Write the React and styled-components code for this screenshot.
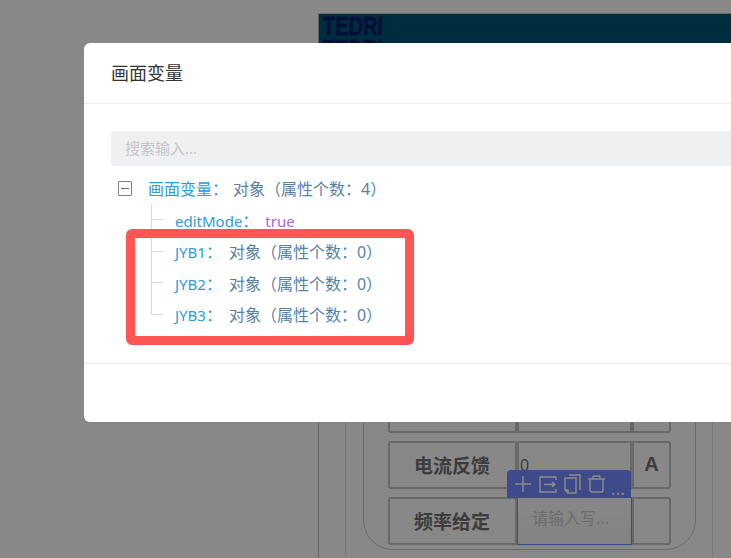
import React from 'react';
import styled, { createGlobalStyle } from 'styled-components';

const GlobalStyle = createGlobalStyle`
  html, body {
    margin: 0;
    height: 100%;
    overflow: hidden;
    background: #f7f7f7;
    font-family: "Noto Sans", "Noto Sans CJK SC", sans-serif;
  }
  * { box-sizing: border-box; }
`;

const Page = styled.div`
  width: 731px;
  height: 558px;
  padding: 13px 0 0 318px;
  overflow: hidden;
`;

const Canvas = styled.div`
  width: 500px;
  border-top: 1px solid #c4c4c4;
  border-left: 1px solid #b5b5b5;
`;

const Banner = styled.div`
  height: 120px;
  padding: 1px 4px;
  background: #005073;
`;

const LogoLine = styled.div`
  color: #001c6a;
  font-family: "Liberation Sans", sans-serif;
  font-size: 25px;
  font-weight: 700;
  line-height: 23px;
  white-space: nowrap;
  -webkit-text-stroke: 0.6px #001c6a;
  transform: scaleX(0.8);
  transform-origin: left center;
`;

const Frame = styled.div`
  width: 368px;
  margin-left: 26px;
  padding: 238px 17px 40px;
  border-left: 1px solid #dcdcdc;
  border-right: 1px solid #dcdcdc;
`;

const Card = styled.div`
  display: flex;
  flex-direction: column;
  gap: 8px;
  width: 333px;
  padding: 12px 24px 4px;
  border: 1px solid #c4c4c4;
  border-radius: 30px;
`;

const FormRow = styled.div`
  display: grid;
  grid-template-columns: 129px 115px 39px;
  height: 48px;
`;

const Cell = styled.div`
  display: flex;
  align-items: center;
  justify-content: ${(p) => (p.$center ? 'center' : 'flex-start')};
  padding-bottom: 2px;
  border: 2px solid #c0c0c0;
  border-radius: ${(p) => p.$radius || '0'};
  color: #6e6e6e;
  font-family: "Liberation Sans", "Noto Sans CJK SC", sans-serif;
  font-size: ${(p) => (p.$center ? '20px' : '19px')};
  font-weight: 700;
`;

const LabelText = styled.span`
  padding-left: 24px;
`;

const ValueCell = styled.div`
  display: flex;
  align-items: center;
  padding: ${(p) => (p.$selected ? '0 0 8px 14px' : '0 0 0 1px')};
  border: ${(p) => (p.$selected ? '1px solid #7387fb' : '2px solid #c0c0c0')};
  background: ${(p) => (p.$selected ? 'linear-gradient(#f7f7f7, #eeeeee)' : 'transparent')};
  color: ${(p) => (p.$selected ? '#c6c6c6' : '#6e6e6e')};
  font-size: 16px;
`;

const FloatingTools = styled.div`
  position: absolute;
  left: 507px;
  top: 470px;
  display: flex;
  align-items: center;
  width: 124px;
  height: 28px;
  padding: 0 6px 0 8px;
  border-radius: 4px 4px 0 0;
  background: #7387fb;
  color: #fff;
`;

const ToolIcon = styled.svg`
  flex: none;
  margin-right: ${(p) => p.$gap}px;
  fill: none;
  stroke: #fff;
  stroke-width: 1.4;
`;

const Dots = styled.span`
  align-self: flex-end;
  margin-bottom: 3px;
  font-size: 16px;
  line-height: 12px;
  letter-spacing: 0.5px;
`;

const Mask = styled.div`
  position: fixed;
  inset: 0;
  background: rgba(0, 0, 0, 0.45);
`;

const Modal = styled.div`
  position: fixed;
  left: 84px;
  top: 43px;
  width: 800px;
  height: 379px;
  display: flex;
  flex-direction: column;
  border-radius: 6px;
  background: #fff;
`;

const ModalHeader = styled.div`
  height: 61px;
  padding: 0 27px;
  border-bottom: 1px solid #ebedf0;
  color: #333;
  font-size: 18px;
  line-height: 60px;
`;

const ModalBody = styled.div`
  flex: 1;
  padding: 27px 27px 0;
`;

const ModalFooter = styled.div`
  height: 59px;
  border-top: 1px solid #ebedf0;
`;

const Search = styled.div`
  height: 35px;
  padding-left: 14px;
  border-radius: 4px;
  background: #eff0f2;
  color: #c4c6cb;
  font-size: 15px;
  line-height: 35px;
`;

const Tree = styled.div`
  margin-top: 6px;
  font-size: 16px;
`;

const RootRow = styled.div`
  display: flex;
  align-items: center;
  height: 32px;
  padding-left: 7px;
`;

const Toggle = styled.span`
  display: flex;
  align-items: center;
  justify-content: center;
  width: 14px;
  height: 15px;
  margin-right: 16px;
  border: 1.5px solid #808080;
  border-radius: 1px;

  &::before {
    content: '';
    width: 8px;
    height: 1px;
    background: #707070;
  }
`;

const ChildRow = styled.div`
  display: flex;
  align-items: center;
  height: 31.5px;
  padding-left: 40px;
`;

const Connector = styled.span`
  flex: none;
  align-self: stretch;
  width: 24px;
  background:
    linear-gradient(#d9d9d9, #d9d9d9) 0 0 / 1px ${(p) => (p.$last ? '50%' : '100%')} no-repeat,
    linear-gradient(#d9d9d9, #d9d9d9) 0 50% / 12px 1px no-repeat;
`;

const NodeText = styled.div`
  padding-top: 2px;
  line-height: 24px;
  white-space: nowrap;
`;

const Key = styled.span`
  color: #2d9cdb;
  margin-right: ${(p) => p.$gap}px;
`;

const KeyName = styled.span`
  font-size: 15px;
`;

const Summary = styled.span`
  color: #5b7fa9;
`;

const BoolValue = styled.span`
  color: #a865d8;
  font-size: 15px;
`;

const Annotation = styled.div`
  position: absolute;
  left: 42px;
  top: 186px;
  width: 288px;
  height: 116px;
  border: 9px solid #ff5555;
  border-radius: 6px;
  pointer-events: none;
`;

const children = ['JYB1', 'JYB2', 'JYB3'];

const App = () => {
  return (<>
    <GlobalStyle />
    <Page>
      <Canvas>
        <Banner>
          <LogoLine>TEDRI</LogoLine>
          <LogoLine>TEDRI</LogoLine>
        </Banner>
        <Frame>
          <Card>
            <FormRow>
              <Cell $radius="3px 0 0 3px" />
              <ValueCell />
              <Cell $radius="0 3px 3px 0" />
            </FormRow>
            <FormRow>
              <Cell $radius="3px 0 0 3px"><LabelText>电流反馈</LabelText></Cell>
              <ValueCell>0</ValueCell>
              <Cell $center $radius="0 3px 3px 0">A</Cell>
            </FormRow>
            <FormRow>
              <Cell $radius="3px 0 0 3px"><LabelText>频率给定</LabelText></Cell>
              <ValueCell $selected>请输入写...</ValueCell>
              <Cell $radius="0 3px 3px 0" />
            </FormRow>
          </Card>
        </Frame>
      </Canvas>
      <FloatingTools>
        <ToolIcon $gap={8} width="16" height="16" viewBox="0 0 16 16">
          <path d="M8 0v16M0 8h16" />
        </ToolIcon>
        <ToolIcon $gap={7} width="18" height="17" viewBox="0 0 18 17">
          <path d="M17 4V1H1v15h16v-3M5 8.500h11M13 6l3 2.500-3 2.500" />
        </ToolIcon>
        <ToolIcon $gap={6} width="17" height="20" viewBox="0 0 17 20">
          <path d="M1 4h11v15H4l-3-3zM1 16h3v3M5 1h11v15" />
        </ToolIcon>
        <ToolIcon $gap={5} width="19" height="18" viewBox="0 0 19 18">
          <path d="M1 4h17M3 4v11a2 2 0 0 0 2 2h9a2 2 0 0 0 2-2V4M6 4V2a1 1 0 0 1 1-1h5a1 1 0 0 1 1 1v2" />
        </ToolIcon>
        <Dots>...</Dots>
      </FloatingTools>
    </Page>
    <Mask />
    <Modal>
      <ModalHeader>画面变量</ModalHeader>
      <ModalBody>
        <Search>搜索输入...</Search>
        <Tree>
          <RootRow>
            <Toggle />
            <NodeText>
              <Key $gap={5}>画面变量：</Key>
              <Summary>对象（属性个数：4）</Summary>
            </NodeText>
          </RootRow>
          <ChildRow>
            <Connector />
            <NodeText>
              <Key $gap={7}><KeyName>editMode</KeyName>：</Key>
              <BoolValue>true</BoolValue>
            </NodeText>
          </ChildRow>
          {children.map((name, i) => (
            <ChildRow key={name}>
              <Connector $last={i === children.length - 1} />
              <NodeText>
                <Key $gap={7}><KeyName>{name}</KeyName>：</Key>
                <Summary>对象（属性个数：0）</Summary>
              </NodeText>
            </ChildRow>
          ))}
        </Tree>
      </ModalBody>
      <ModalFooter />
      <Annotation />
    </Modal>
  </>);
};

export default App;
